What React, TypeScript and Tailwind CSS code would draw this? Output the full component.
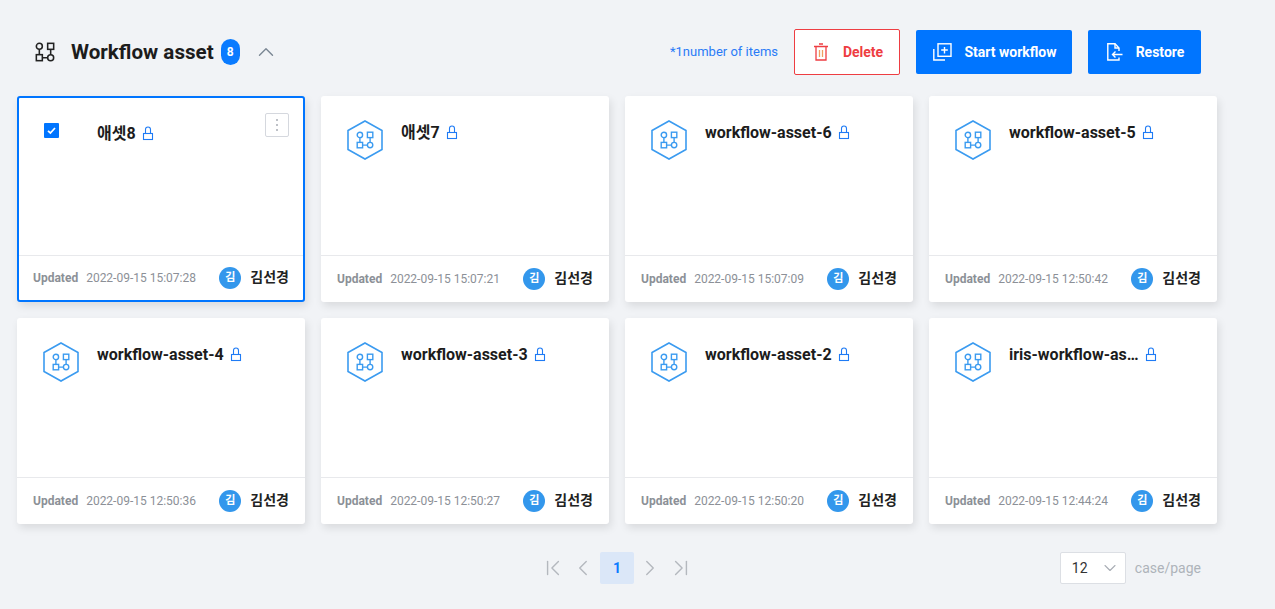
import { ChevronDown, ChevronUp, ChevronLeft, ChevronRight, ChevronFirst, ChevronLast } from "lucide-react";

const FONT = "font-['Roboto','Noto_Sans_CJK_KR',sans-serif]";

const assets = [
  { name: "애셋8", date: "2022-09-15 15:07:28", selected: true },
  { name: "애셋7", date: "2022-09-15 15:07:21" },
  { name: "workflow-asset-6", date: "2022-09-15 15:07:09" },
  { name: "workflow-asset-5", date: "2022-09-15 12:50:42" },
  { name: "workflow-asset-4", date: "2022-09-15 12:50:36" },
  { name: "workflow-asset-3", date: "2022-09-15 12:50:27" },
  { name: "workflow-asset-2", date: "2022-09-15 12:50:20" },
  { name: "iris-workflow-as…", date: "2022-09-15 12:44:24" },
];

function FlowGlyph({ color, x = 0, y = 0 }: { color: string; x?: number; y?: number }) {
  return (
    <g transform={`translate(${x} ${y})`} fill="none" stroke={color} strokeWidth="1.4">
      <circle cx="3.5" cy="3.5" r="2.7" />
      <rect x="11" y="0.8" width="5.4" height="5.4" />
      <rect x="0.8" y="11" width="5.4" height="5.4" />
      <circle cx="13.7" cy="13.7" r="2.7" />
      <path d="M3.5 6.2V11M13.7 6.2V11M6.2 13.7H11" />
    </g>
  );
}

function HexIcon() {
  return (
    <svg width="36" height="40" viewBox="0 0 36 40" className="shrink-0">
      <path d="M18 1 L35 10.5 V29.5 L18 39 L1 29.5 V10.5 Z" fill="none" stroke="#3b9bf0" strokeWidth="1.6" />
      <FlowGlyph color="#3b9bf0" x={9.4} y={11.4} />
    </svg>
  );
}

function LockIcon() {
  return (
    <svg width="12" height="15" viewBox="0 0 12 15" fill="none" stroke="#1f7bf5" strokeWidth="1.1" className="mb-[2px] ml-[6px] shrink-0">
      <rect x="1.5" y="7.5" width="9" height="6" />
      <path d="M3.5 7.5V3.5a2.5 2.5 0 0 1 5 0V7.5" />
    </svg>
  );
}

function AssetCard({ name, date, selected }: { name: string; date: string; selected?: boolean }) {
  return (
    <div
      className={`relative flex h-[206px] flex-col rounded-[3px] bg-white shadow-[2px_4px_8px_rgba(0,0,0,0.1)] ${
        selected ? "border-2 border-[#0075ff]" : ""
      }`}
    >
      <div className={`flex flex-1 items-start ${selected ? "pl-[25px] pt-[23px]" : "pl-[26px] pt-[24px]"}`}>
        {selected ? (
          <div className="mr-[38px] mt-[2px] flex h-[15px] w-[15px] shrink-0 items-center justify-center rounded-[1px] bg-[#0075ff]">
            <svg width="11" height="11" viewBox="0 0 11 11">
              <path d="M2 5.8 L4.4 8 L9 3" fill="none" stroke="white" strokeWidth="1.7" />
            </svg>
          </div>
        ) : (
          <HexIcon />
        )}
        <div className={`flex items-center ${selected ? "" : "ml-[18px]"} mt-[1px]`}>
          <span className="text-base leading-[24px] font-bold whitespace-nowrap text-[#1c1c1c]">{name}</span>
          <LockIcon />
        </div>
      </div>
      {selected && (
        <button className="absolute top-[15px] right-[14px] flex h-[24px] w-[24px] items-center justify-center rounded-[2px] border border-[#d5d8de] bg-white">
          <svg width="4" height="14" viewBox="0 0 4 14">
            <circle cx="2" cy="2" r="1" fill="#a9adb5" />
            <circle cx="2" cy="7" r="1" fill="#a9adb5" />
            <circle cx="2" cy="12" r="1" fill="#a9adb5" />
          </svg>
        </button>
      )}
      <div
        className={`flex items-center border-t border-[#e8e9ec] ${
          selected ? "h-[45px] pr-[14px] pl-[14px]" : "h-[47px] pr-[16px] pl-[16px]"
        }`}
      >
        <span className="text-xs font-bold text-[#8c9097]">Updated</span>
        <span className="ml-2 text-xs text-[#8c9097]">{date}</span>
        <span className="ml-auto flex h-[22px] w-[22px] items-center justify-center rounded-full bg-[#3397ec] text-[11px] font-bold text-white">
          김
        </span>
        <span className="mb-[2px] ml-[9px] text-sm font-bold text-[#222]">김선경</span>
      </div>
    </div>
  );
}

export default function App() {
  return (
    <div className={`${FONT} h-[609px] w-[1275px] overflow-hidden bg-[#f1f3f6]`}>
      <div className="flex h-[96px] w-[1201px] items-center pt-[8px] pl-[35px]">
        <svg width="20" height="20" viewBox="0 0 18 18">
          <FlowGlyph color="#222" x={0.4} y={0.4} />
        </svg>
        <h1 className="ml-4 text-[20.6px] font-bold text-[#1c1c1c]">Workflow asset</h1>
        <span className="ml-[7px] flex h-[26px] w-[19px] items-center justify-center rounded-full bg-[#0a7bff] text-xs font-bold text-white">
          8
        </span>
        <ChevronUp size={26} strokeWidth={1.3} className="ml-[13px] text-[#7b8794]" />
        <span className="ml-auto text-[13px] text-[#2a7bf6]">*1number of items</span>
        <button className="ml-4 flex h-[46px] w-[106px] items-center justify-center gap-[15px] rounded-[2px] border border-[#ee3d42] bg-white pl-[3px] text-sm font-bold text-[#ee3d42]">
          <svg width="14" height="18" viewBox="0 0 14 18" fill="none" stroke="#ee3d42" strokeWidth="1.3">
            <path d="M0 3.5H14M5 1H9M2 3.5V17H12V3.5" />
            <path d="M5.5 7V14M8.5 7V14" stroke="#f0a060" />
          </svg>
          Delete
        </button>
        <button className="ml-4 flex h-[44px] w-[156px] items-center justify-center gap-[12px] rounded-[2px] bg-[#0075ff] pl-[2px] text-sm font-bold text-white">
          <svg width="19" height="18" viewBox="0 0 19 18" fill="none" stroke="white" strokeWidth="1.4">
            <rect x="5" y="0.8" width="13" height="12.5" />
            <path d="M11.5 4V10.5M8.2 7H14.8M0.8 6V17H12" />
          </svg>
          Start workflow
        </button>
        <button className="ml-4 flex h-[44px] w-[113px] items-center justify-center gap-[13px] rounded-[2px] bg-[#0075ff] pl-[2px] text-sm font-bold text-white">
          <svg width="16" height="18" viewBox="0 0 16 18" fill="none" stroke="white" strokeWidth="1.4">
            <path d="M12 8V5L8 0.8H0.8V17H12V14.5" />
            <path d="M8 0.8V5H12M15.5 11.5H5.5M8.5 8.5L5.5 11.5L8.5 14.5" />
          </svg>
          Restore
        </button>
      </div>

      <div className="grid w-[1217px] grid-cols-4 gap-4 pl-[17px]">
        {assets.map((a) => (
          <AssetCard key={a.name} {...a} />
        ))}
      </div>

      <div className="mt-[28px] flex h-[32px] w-[1201px] items-center">
        <div className="ml-[540px] flex items-center text-[#b4b8be]">
          <ChevronFirst size={26} strokeWidth={1.3} />
          <ChevronLeft size={26} strokeWidth={1.3} className="ml-[4px]" />
          <span className="ml-[4px] flex h-[32px] w-[34px] items-center justify-center rounded-[2px] bg-[#dbe7f8] text-sm font-bold text-[#0a7bff]">
            1
          </span>
          <ChevronRight size={26} strokeWidth={1.3} className="ml-[3px]" />
          <ChevronLast size={26} strokeWidth={1.3} className="ml-[5px]" />
        </div>
        <div className="ml-auto flex h-[32px] w-[66px] items-center justify-between rounded-[2px] border border-[#dcdfe4] bg-white pr-[5px] pl-[11px] text-sm text-[#333]">
          12
          <ChevronDown size={20} strokeWidth={1.3} className="text-[#a9adb5]" />
        </div>
        <span className="ml-[9px] text-sm text-[#aeb3ba]">case/page</span>
      </div>
    </div>
  );
}
